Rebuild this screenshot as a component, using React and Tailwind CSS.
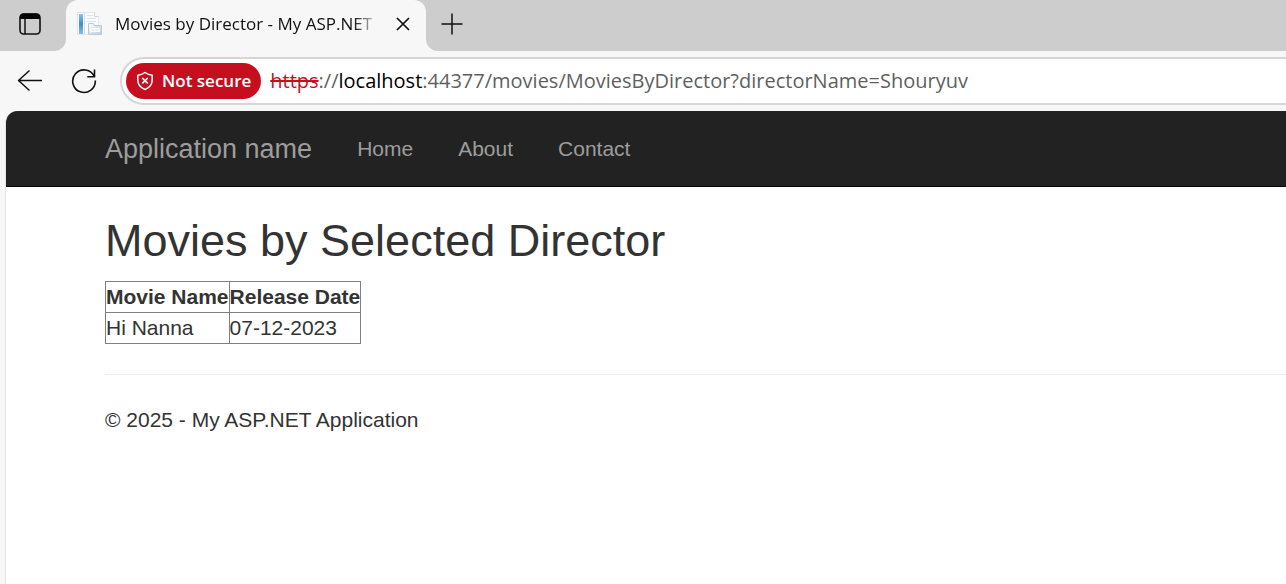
const movies = [{ name: "Hi Nanna", released: "07-12-2023" }];
const links = ["Home", "About", "Contact"];

function TabActionsIcon() {
  return (
    <svg width="22" height="22" viewBox="0 0 22 22" fill="none" aria-hidden="true">
      <rect x="1" y="1" width="20" height="20" rx="3.5" stroke="#111" strokeWidth="1.6" />
      <path d="M1 6V4a3.5 3.5 0 0 1 3.5-3.5h13A3.5 3.5 0 0 1 21 4v2z" fill="#000" />
      <path d="M6 6v15" stroke="#111" strokeWidth="1.5" />
    </svg>
  );
}

function FaviconIcon() {
  return (
    <svg className="shrink-0" width="26" height="26" viewBox="0 0 26 26" aria-hidden="true">
      <defs>
        <linearGradient id="spine" x1="0" y1="0" x2="0" y2="1">
          <stop offset="0" stopColor="#8fc3e6" />
          <stop offset="0.5" stopColor="#3f8fc4" />
          <stop offset="1" stopColor="#86c2e8" />
        </linearGradient>
        <linearGradient id="folder" x1="0" y1="0" x2="1" y2="1">
          <stop offset="0" stopColor="#fcfdfe" />
          <stop offset="1" stopColor="#b9cbdc" />
        </linearGradient>
      </defs>
      <path d="M.5 1.500h17l4 4v18H.5z" fill="#fafbfc" stroke="#e2e5e9" />
      <path d="M17.500 1.500v4h4" fill="#fff" stroke="#cfd3d8" />
      <rect x="2" y="3" width="4" height="20" fill="url(#spine)" />
      <path d="M7.500 2v21" stroke="#d7dbe0" />
      <path d="M10 4.500h6M10 7.500h9M10 10.500h9" stroke="#dde2e7" />
      <path d="M11.500 12.500h5l1 2h7v9h-13z" fill="url(#folder)" stroke="#c0c8d0" />
      <path d="M13.500 17.500h9v3h-9z" fill="#eef3f8" stroke="#fff" />
    </svg>
  );
}

function CloseIcon() {
  return (
    <svg width="14" height="14" viewBox="0 0 14 14" aria-hidden="true">
      <path d="M1 1l12 12M13 1L1 13" stroke="#111" strokeWidth="1.7" />
    </svg>
  );
}

function PlusIcon() {
  return (
    <svg width="22" height="22" viewBox="0 0 22 22" aria-hidden="true">
      <path d="M11 .5v21M.5 11h21" stroke="#111" strokeWidth="1.5" />
    </svg>
  );
}

function BackIcon() {
  return (
    <svg width="26" height="24" viewBox="0 0 26 24" fill="none" aria-hidden="true">
      <path d="M25 11.500H1.500M12.500 1.500l-11 10 11 10" stroke="#111" strokeWidth="1.5" strokeLinejoin="round" />
    </svg>
  );
}

function ReloadIcon() {
  return (
    <svg width="26" height="26" viewBox="0 0 26 26" fill="none" aria-hidden="true">
      <path d="M23.3 8.500A11.300 11.300 0 1 0 24.300 12.500" stroke="#111" strokeWidth="1.6" />
      <path d="M23.500 1.500v7.200h-7.200" stroke="#111" strokeWidth="1.6" />
    </svg>
  );
}

function ShieldIcon() {
  return (
    <svg width="18" height="20" viewBox="0 0 18 20" fill="none" stroke="#fff" aria-hidden="true">
      <path
        d="M9 1.500C11.200 3.100 13.500 4 16.200 4.200V9c0 4.500-2.600 7.700-7.200 9.500C4.400 16.700 1.800 13.500 1.800 9V4.200C4.500 4 6.800 3.100 9 1.500z"
        strokeWidth="1.500"
        strokeLinejoin="round"
      />
      <path d="M6.300 7l5.400 5.400M11.700 7l-5.400 5.400" strokeWidth="1.600" />
    </svg>
  );
}

function TabStrip() {
  return (
    <div className="flex h-[51px]">
      <div className="flex w-[66px] shrink-0 items-center rounded-br-xl bg-[#cdcdcd] pb-1 pl-[19px]">
        <button type="button" aria-label="Tab actions">
          <TabActionsIcon />
        </button>
      </div>
      <div className="w-[360px] shrink-0 bg-[#cdcdcd]">
        <div className="flex h-full items-center rounded-t-xl bg-[#f7f7f7] pr-4 pb-1 pl-[11px]">
          <FaviconIcon />
          <span className="ml-3 flex-1 text-[17px] leading-6 whitespace-nowrap text-[#111] [mask-image:linear-gradient(to_right,black_90%,transparent)]">
            Movies by Director - My ASP.NET
          </span>
          <button type="button" aria-label="Close tab" className="ml-4">
            <CloseIcon />
          </button>
        </div>
      </div>
      <div className="flex flex-1 items-center rounded-bl-xl bg-[#cdcdcd] pb-1 pl-[15px]">
        <button type="button" aria-label="New tab">
          <PlusIcon />
        </button>
      </div>
    </div>
  );
}

function Toolbar() {
  return (
    <div className="flex h-[60px] items-center pl-[17px]">
      <button type="button" aria-label="Back">
        <BackIcon />
      </button>
      <button type="button" aria-label="Refresh" className="ml-7">
        <ReloadIcon />
      </button>
      <div className="ml-[23px] flex h-12 flex-1 items-center rounded-l-full border-2 border-r-0 border-[#d6d6d6] bg-white pl-1">
        <button
          type="button"
          className="flex h-9 shrink-0 items-center gap-2 rounded-full bg-[#c50f1f] px-[10px] text-[17px] font-semibold text-white"
        >
          <ShieldIcon />
          Not secure
        </button>
        <label htmlFor="address" className="ml-[9px] shrink-0 text-[20px] text-[#5f5f5f]">
          <span className="text-[#c50f1f] line-through decoration-2">https</span>://
          <span className="text-black">localhost</span>
        </label>
        <input
          id="address"
          type="text"
          spellCheck={false}
          defaultValue=":44377/movies/MoviesByDirector?directorName=Shouryuv"
          className="min-w-0 flex-1 bg-transparent text-[20px] text-[#5f5f5f] outline-none"
        />
      </div>
    </div>
  );
}

export default function App() {
  return (
    <div className="flex min-h-screen flex-col overflow-x-hidden bg-[#f7f7f7] font-['Open_Sans','Noto_Sans',sans-serif]">
      <TabStrip />
      <Toolbar />
      <div className="ml-[5px] flex-1 overflow-hidden rounded-tl-xl border-l border-[#e3e3e3] bg-white font-['Liberation_Sans',Arial,sans-serif] text-[21px] leading-[30px] text-[#333]">
        <nav className="flex h-[76px] items-center border-b border-[#080808] bg-[#222] pl-[99px] text-[#9d9d9d]">
          <a href="#app" className="mr-[45px] text-[27px]">
            Application name
          </a>
          <div className="flex gap-[45px]">
            {links.map((link) => (
              <a key={link} href={`#${link.toLowerCase()}`}>
                {link}
              </a>
            ))}
          </div>
        </nav>
        <main className="pl-[99px]">
          <h2 className="pt-[29px] pb-4 text-[45px] leading-[49px]">Movies by Selected Director</h2>
          <table className="border-collapse border border-[#808080]">
            <thead>
              <tr>
                <th className="border border-[#808080] text-left font-bold">Movie Name</th>
                <th className="border border-[#808080] text-left font-bold">Release Date</th>
              </tr>
            </thead>
            <tbody>
              {movies.map((movie) => (
                <tr key={movie.name}>
                  <td className="border border-[#808080]">{movie.name}</td>
                  <td className="border border-[#808080]">{movie.released}</td>
                </tr>
              ))}
            </tbody>
          </table>
          <hr className="my-[30px] border-[#eee]" />
          <footer>
            <p>© 2025 - My ASP.NET Application</p>
          </footer>
        </main>
      </div>
    </div>
  );
}
